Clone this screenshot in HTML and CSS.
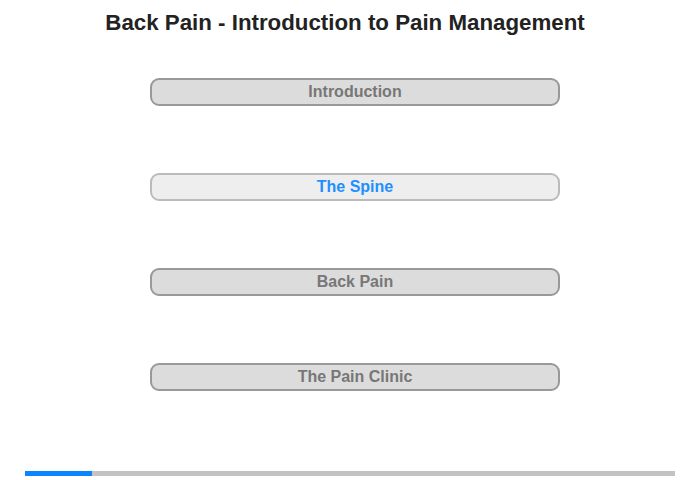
FILE: index.html
```html
<!DOCTYPE html>
<html>
<head>
<meta charset="utf-8">
<link rel="stylesheet" href="styles.css">
</head>
<body>
<div class="page">
  <h1 class="title">Back Pain - Introduction to Pain Management</h1>
  <nav class="menu">
    <div class="item">Introduction</div>
    <div class="item active">The Spine</div>
    <div class="item">Back Pain</div>
    <div class="item">The Pain Clinic</div>
  </nav>
  <div class="progress"><div class="progress-fill" style="width:67px"></div></div>
</div>
</body>
</html>
```
FILE: styles.css
```css
html, body {
  margin: 0;
  padding: 0;
  background: #fff;
}
.page {
  width: 700px;
  height: 480px;
  display: flex;
  flex-direction: column;
  font-family: "Liberation Sans", Arial, sans-serif;
}
.title {
  margin: 10px 10px 0 0;
  font-size: 22.3px;
  font-weight: bold;
  color: #222;
  text-align: center;
  line-height: 26px;
}
.menu {
  display: flex;
  flex-direction: column;
  gap: 67px;
  margin-top: 42px;
  padding-left: 150px;
}
.item {
  box-sizing: border-box;
  width: 410px;
  height: 28px;
  border: 2px solid #999;
  border-radius: 9px;
  background: #dcdcdc;
  color: #777;
  font-size: 16px;
  font-weight: bold;
  text-align: center;
  line-height: 24px;
}
.item.active {
  background: #eee;
  border-color: #bbb;
  color: #1e90ff;
}
.progress {
  margin: auto 25px 4px 25px;
  height: 5px;
  background: #c3c3c3;
}
.progress-fill {
  height: 100%;
  background: #0a84ff;
}
```
